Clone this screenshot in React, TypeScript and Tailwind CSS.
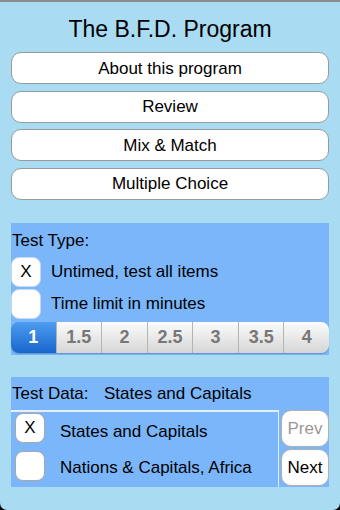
const menu = ["About this program", "Review", "Mix & Match", "Multiple Choice"];
const minutes = ["1", "1.5", "2", "2.5", "3", "3.5", "4"];

function Check({ on, bordered }: { on?: boolean; bordered?: boolean }) {
  return (
    <div
      className={`flex h-[30px] w-[30px] shrink-0 items-center justify-center rounded-[8px] bg-white text-[17px] leading-none text-black ${
        bordered ? "border border-[#a8a8a8]" : "border border-[#c8d8e8]"
      }`}
    >
      {on ? "X" : ""}
    </div>
  );
}

export default function App() {
  return (
    <div className="h-[510px] w-[340px] bg-black font-['Liberation_Sans',Arial,sans-serif]">
      <div className="flex h-full flex-col rounded-b-[7px] border-t-2 border-[#8c8c8c] bg-[#a9dbf2] px-[11px]">
        <h1 className="flex h-[50px] items-center justify-center pt-[4px] text-[23px] leading-none text-black">
          The B.F.D. Program
        </h1>

        <div className="flex flex-col gap-[6.5px]">
          {menu.map((label) => (
            <button
              key={label}
              className="flex h-[32px] items-center justify-center rounded-[10px] border border-[#9a9a9a] bg-white text-[17px] leading-none text-black"
            >
              {label}
            </button>
          ))}
        </div>

        {/* test type */}
        <div className="mt-[23px] flex h-[132px] flex-col bg-[#7ab6f9]">
          <div className="flex h-[34px] items-center pl-[1px] pt-[2px] text-[17px] leading-none text-black">
            Test Type:
          </div>
          <div className="flex flex-col gap-[2px]">
            <div className="flex items-center gap-[10px]">
              <Check on />
              <span className="text-[17px] leading-none text-black">Untimed, test all items</span>
            </div>
            <div className="flex items-center gap-[10px]">
              <Check />
              <span className="text-[17px] leading-none text-black">Time limit in minutes</span>
            </div>
          </div>
          <div className="mt-[3px] flex h-[31px] overflow-hidden rounded-[8px] shadow-[0_1px_1px_rgba(60,90,130,0.35)]">
            {minutes.map((m, i) => (
              <div
                key={m}
                className={`flex flex-1 items-center justify-center text-[18px] font-bold leading-none ${
                  i === 0
                    ? "bg-gradient-to-b from-[#4c9cf0] to-[#1666cc] text-white"
                    : "border-l border-[#b4b4b4] bg-gradient-to-b from-[#fcfcfc] to-[#d6d6d6] text-[#777777]"
                }`}
              >
                {m}
              </div>
            ))}
          </div>
        </div>

        {/* test data */}
        <div className="mt-[22px] flex h-[110px] flex-col bg-[#7ab6f9]">
          <div className="flex h-[33px] items-center pl-[1px] text-[17px] leading-none text-black">
            <span className="w-[92px]">Test Data:</span>
            <span>States and Capitals</span>
          </div>
          <div className="flex flex-1">
            <div className="flex flex-1 flex-col gap-[8px] border-r border-t-2 border-white/80 pl-[4px] pt-[1px]">
              <div className="flex items-center gap-[15px]">
                <Check on bordered />
                <span className="pt-[8px] text-[17px] leading-none text-black">States and Capitals</span>
              </div>
              <div className="flex items-center gap-[15px]">
                <Check bordered />
                <span className="pt-[4px] text-[17px] leading-none text-black">Nations &amp; Capitals, Africa</span>
              </div>
            </div>
            <div className="ml-[2px] flex w-[48px] flex-col gap-[2px]">
              <button className="flex h-[37px] items-center justify-center rounded-[10px] border border-[#b0b0b0] bg-white text-[17px] leading-none text-[#999999]">
                Prev
              </button>
              <button className="flex h-[37px] items-center justify-center rounded-[10px] border border-[#b0b0b0] bg-white text-[17px] leading-none text-black">
                Next
              </button>
            </div>
          </div>
        </div>
      </div>
    </div>
  );
}
